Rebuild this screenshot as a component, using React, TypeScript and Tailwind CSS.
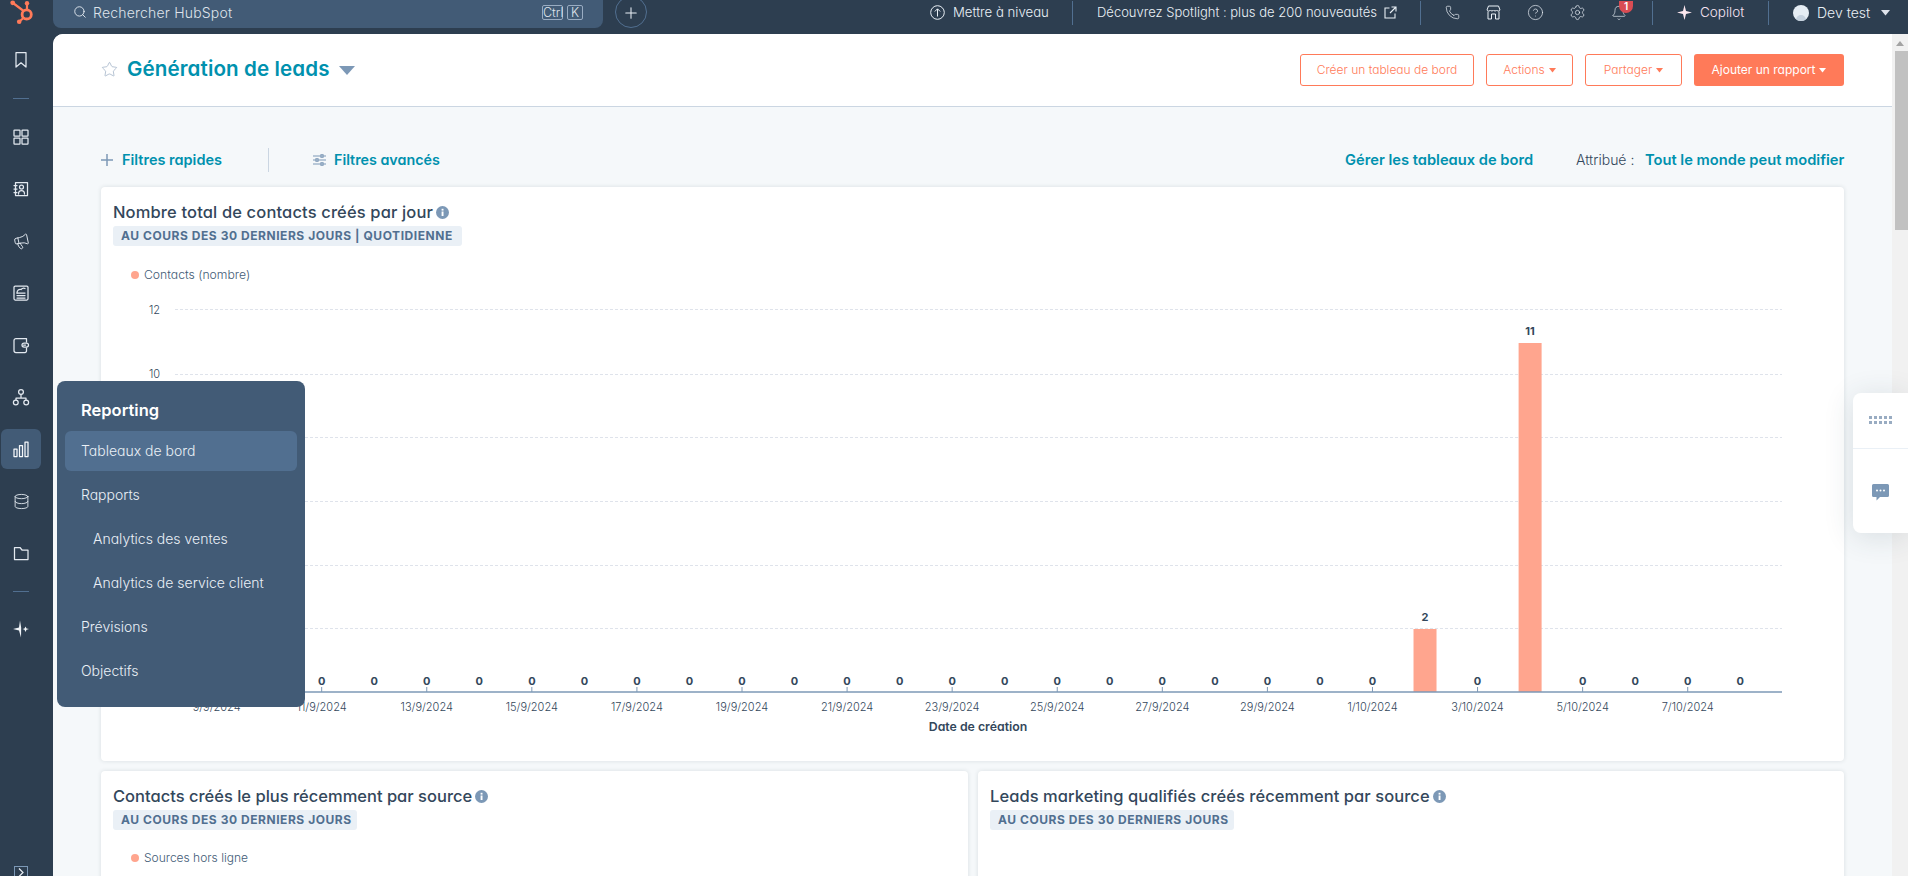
import React from "react";
import { Phone, CircleHelp, Settings, Bell, Database, Search, Plus, Star, Megaphone } from "lucide-react";

const S = { fill: "none", stroke: "#e3e9f0", strokeWidth: 1.25, strokeLinecap: "round" as const, strokeLinejoin: "round" as const };

function Logo() {
  return (
    <svg width="53" height="34" viewBox="0 0 53 34">
      <g stroke="#ff7a59" fill="none" strokeWidth="2.2" strokeLinecap="round">
        <circle cx="26.7" cy="14.4" r="4.6" strokeWidth="2.8" />
        <path d="M13 3 L23 10.5" />
        <path d="M27 4 V9" />
        <path d="M19.5 21.5 L23.6 17.8" />
      </g>
      <g fill="#ff7a59">
        <circle cx="12.7" cy="2.8" r="2.4" />
        <circle cx="27" cy="3.2" r="2.2" />
        <circle cx="19.2" cy="21.8" r="2.3" />
      </g>
    </svg>
  );
}

function NavIcon({ name }: { name: string }) {
  const p = { width: 20, height: 20, viewBox: "0 0 20 20", ...S };
  switch (name) {
    case "bookmark":
      return <svg {...p}><path d="M5 2.500h10v14.500l-5-4.200L5 17z" /></svg>;
    case "grid":
      return <svg {...p}><rect x="3" y="3" width="6" height="6" rx=".6" /><rect x="11" y="3" width="6" height="6" rx=".6" /><rect x="3" y="11" width="6" height="6" rx=".6" /><rect x="11" y="11" width="6" height="6" rx=".6" /></svg>;
    case "contact":
      return <svg {...p}><path d="M4.500 3.500h12v13h-12z" /><path d="M3 6.500h3M3 10h3M3 13.500h3" /><circle cx="10.500" cy="8" r="2" /><path d="M7.500 15c0-2.500 1.500-3.500 3-3.500s3 1 3 3.500" /></svg>;
    case "megaphone":
      return <Megaphone size={17} strokeWidth={1.25} color="#e3e9f0" className="-rotate-12" />;
    case "report":
      return <svg {...p}><rect x="3" y="3" width="14" height="14" rx="1.200" /><path d="M6 12.500h8M6 15h8M6 10c0-3 2-4 4-3.500 1.500-1.500 3-1.500 4-1" /><path d="M6 10h8" /></svg>;
    case "wallet":
      return <svg {...p}><path d="M15.500 7V3.500H5A2 2 0 0 0 3 5.500v10a2 2 0 0 0 2 2h9a1.500 1.500 0 0 0 1.500-1.500v-3" /><rect x="11" y="8" width="6.500" height="4.200" rx="2.100" /><path d="M12.500 10.100h2" /></svg>;
    case "org":
      return <svg {...p}><circle cx="10" cy="5" r="2.400" /><circle cx="4.800" cy="15.500" r="2.400" /><circle cx="15.200" cy="15.500" r="2.400" /><path d="M10 7.500v3.500M5 13v-2h10v2" /></svg>;
    case "chart":
      return <svg {...p} stroke="#f5f8fa"><rect x="3" y="10" width="3" height="7.500" /><rect x="8.500" y="6.500" width="3" height="11" /><rect x="14" y="3" width="3" height="14.500" /></svg>;
    case "database":
      return <Database size={17} strokeWidth={1.25} color="#e3e9f0" />;
    case "folder":
      return <svg {...p}><path d="M3.500 4.500h5.500l2 2.500h6v9.500H3.500z" /></svg>;
    case "spark":
      return <svg width="20" height="20" viewBox="0 0 20 20" fill="#f0f4f8"><path d="M9 1.500 10.200 8.800 10 18.500 8 11.500 2 10 8 8.500z" /><path d="M14.500 7.500 15.500 9.500 18 10 15.500 10.700 14.500 13 13.500 10.700 11.500 10 13.500 9.500z" /></svg>;
  }
  return null;
}

function NavItem({ name, active }: { name: string; active?: boolean }) {
  return (
    <div className="h-[52px] flex items-center pl-[1px]">
      <div className={`w-[40px] h-[40px] rounded-[6px] flex items-center justify-center ${active ? "bg-[#425b76]" : ""}`}>
        <NavIcon name={name} />
      </div>
    </div>
  );
}

function NavRail() {
  return (
    <nav className="w-[53px] shrink-0 bg-[#2d3e50] flex flex-col h-full">
      <div className="h-[34px] overflow-hidden"><Logo /></div>
      <NavItem name="bookmark" />
      <div className="h-[25px] flex items-center pl-[13px]"><div className="w-[16px] h-px bg-[#516f90]" /></div>
      {["grid", "contact", "megaphone", "report", "wallet", "org"].map((n) => <NavItem key={n} name={n} />)}
      <NavItem name="chart" active />
      <NavItem name="database" />
      <NavItem name="folder" />
      <div className="h-[24px] flex items-center pl-[13px]"><div className="w-[16px] h-px bg-[#516f90]" /></div>
      <NavItem name="spark" />
      <div className="mt-auto flex pl-[14px]">
        <div className="w-[14px] h-[10px] border-x border-t border-[#7c98b6] flex justify-center overflow-hidden">
          <svg width="10" height="10" viewBox="0 0 10 10" fill="none" stroke="#eaf0f6" strokeWidth="1.2"><path d="M3 1.500 7 5.500 3 9.500" /></svg>
        </div>
      </div>
    </nav>
  );
}

function Sep({ ml }: { ml: string }) {
  return <div className={`w-px h-[24px] bg-[#516f90] ${ml}`} />;
}

function TopBar() {
  return (
    <header className="h-[34px] shrink-0 flex items-start text-[#eaf0f6] text-[13px] font-light whitespace-nowrap">
      <div className="w-[550px] h-[28px] bg-[#425b76] rounded-b-lg flex items-center pb-[4px] text-[14px] text-[#dfe3eb]">
        <Search size={14} strokeWidth={1.5} className="ml-[20px]" color="#eaf0f6" />
        <span className="ml-[6px] w-[449px] tracking-[0.2px]">Rechercher HubSpot</span>
        <span className="w-[21px] h-[15px] border border-[#99acc2] rounded-[2px] text-[12.500px] leading-[13px] text-center">Ctrl</span>
        <span className="ml-[4px] w-[16px] h-[15px] border border-[#99acc2] rounded-[2px] text-[12.500px] leading-[13px] text-center">K</span>
      </div>
      <div className="ml-[12px] w-[32px] h-[32px] -mt-[4px] border border-[#516f90] rounded-full flex items-center justify-center">
        <Plus size={18} strokeWidth={1.4} color="#eaf0f6" className="mt-[1px]" />
      </div>
      <div className="h-[25px] flex items-center">
        <svg className="ml-[283px]" width="15" height="15" viewBox="0 0 15 15" fill="none" stroke="#eaf0f6" strokeWidth="1"><circle cx="7.500" cy="7.500" r="6.800" /><path d="M7.500 11.500V4M4.800 6.500 7.500 3.800 10.200 6.500" /></svg>
        <span className="ml-[8px] w-[95px] text-[13.200px]">Mettre à niveau</span>
        <Sep ml="ml-[24px]" />
        <span className="ml-[24px] w-[279px]">Découvrez Spotlight : plus de 200 nouveautés</span>
        <svg className="ml-[8px]" width="13" height="13" viewBox="0 0 13 13" fill="none" stroke="#eaf0f6" strokeWidth="1.100"><path d="M5.500 2H1v10h10V7.500M7.500 1H12v4.500M12 1 6 7" /></svg>
        <Sep ml="ml-[23px]" />
        <Phone size={15} strokeWidth={1.15} className="ml-[24px]" color="#eaf0f6" />
        <svg className="ml-[26px]" width="15" height="15" viewBox="0 0 15 15" fill="none" stroke="#eaf0f6" strokeWidth="1"><path d="M2.500 1h10l1.500 4a1.800 1.800 0 0 1-3.300 0 1.800 1.800 0 0 1-3.200 0 1.800 1.800 0 0 1-3.200 0A1.800 1.800 0 0 1 1 5zM2 6.500V14h3.500V9h4v5H13V6.500" /></svg>
        <CircleHelp size={17} strokeWidth={1} className="ml-[26px]" color="#eaf0f6" />
        <Settings size={17} strokeWidth={1} className="ml-[25px]" color="#eaf0f6" />
        <div className="relative ml-[25px] w-[16px] h-[16px]">
          <Bell size={16} strokeWidth={1} color="#eaf0f6" />
          <span className="absolute -top-[4px] left-[8px] w-[14px] h-[12px] rounded-b-full bg-[#d94c53] text-white text-[10px] font-semibold leading-[11px] text-center">1</span>
        </div>
        <Sep ml="ml-[25px]" />
        <svg className="ml-[24px]" width="15" height="15" viewBox="0 0 15 15" fill="#fde8ef"><path d="M7.500 0 9 6 15 7.500 9 9 7.500 15 6 9 0 7.500 6 6z" /></svg>
        <span className="ml-[8px] w-[44px] text-[13.500px] text-[#f6e3f2]">Copilot</span>
        <Sep ml="ml-[24px]" />
        <div className="ml-[24px] w-[16px] h-[16px] rounded-full bg-[#e5edf4] overflow-hidden flex justify-center items-end">
          <div className="w-[10px] h-[6px] rounded-t-full bg-[#c5d2df]" />
        </div>
        <span className="ml-[8px] w-[54px] text-[14px]">Dev test</span>
        <svg className="ml-[10px]" width="9" height="6" viewBox="0 0 9 6" fill="#dfe3eb"><path d="M0 0h9L4.500 5.500z" /></svg>
      </div>
    </header>
  );
}

function Caret({ color = "#ff7a59" }: { color?: string }) {
  return <svg className="ml-[4px] inline-block" width="7" height="5" viewBox="0 0 7 5" fill={color}><path d="M0 0h7L3.500 4.500z" /></svg>;
}

function OutlineBtn({ w, children }: { w: string; children: React.ReactNode }) {
  return <button className={`h-[32px] ${w} border border-[#ff7a59] rounded-[3px] text-[#ff7a59] text-[12px] font-light flex items-center justify-center bg-white whitespace-nowrap`}>{children}</button>;
}

function Info() {
  return (
    <svg className="ml-[3px] shrink-0" width="13" height="13" viewBox="0 0 13 13">
      <circle cx="6.500" cy="6.500" r="6.500" fill="#7c98b6" />
      <rect x="5.600" y="5.500" width="1.900" height="4.500" fill="#fff" />
      <rect x="5.600" y="2.800" width="1.900" height="1.800" fill="#fff" />
    </svg>
  );
}

function Header() {
  return (
    <div className="h-[73px] shrink-0 bg-white border-b border-[#cbd6e2] pl-[48px] pr-[48px] flex justify-between">
      <div className="flex items-center h-[70px]">
        <Star size={17} strokeWidth={1} color="#99acc2" />
        <span className="ml-[9px] w-[201px] text-[#0091ae] text-[20.600px] font-semibold whitespace-nowrap tracking-[0.1px]">Génération de leads</span>
        <svg className="ml-[11px] mt-[2px]" width="16" height="9" viewBox="0 0 16 9" fill="#7c98b6"><path d="M0 0h16L8 9z" /></svg>
      </div>
      <div className="flex gap-[12px] pt-[20px]">
        <OutlineBtn w="w-[174px]">Créer un tableau de bord</OutlineBtn>
        <OutlineBtn w="w-[87px]">Actions<Caret /></OutlineBtn>
        <OutlineBtn w="w-[97px]">Partager<Caret /></OutlineBtn>
        <button className="h-[32px] w-[150px] rounded-[3px] bg-[#ff7a59] text-white text-[12px] flex items-center justify-center whitespace-nowrap">Ajouter un rapport<Caret color="#fff" /></button>
      </div>
    </div>
  );
}

function FilterRow() {
  return (
    <div className="h-[24px] mt-[41px] flex items-center justify-between text-[14.500px] font-semibold text-[#0091ae] whitespace-nowrap">
      <div className="flex items-center">
        <svg width="12" height="12" viewBox="0 0 12 12" stroke="#7c98b6" strokeWidth="1.500"><path d="M6 0v12M0 6h12" /></svg>
        <span className="ml-[9px] w-[100px]">Filtres rapides</span>
        <div className="ml-[46px] w-px h-[24px] bg-[#cbd6e2]" />
        <svg className="ml-[44px]" width="13" height="12" viewBox="0 0 13 12" stroke="#7c98b6" strokeWidth="1.200" fill="#f5f8fa"><path d="M0 2h13M0 6h13M0 10h13" /><rect x="8" y=".8" width="2" height="2.400" /><rect x="3" y="4.800" width="2" height="2.400" /><rect x="8" y="8.800" width="2" height="2.400" /></svg>
        <span className="ml-[8px] text-[14.300px]">Filtres avancés</span>
      </div>
      <div className="flex items-center">
        <span className="w-[187px] text-[14.700px]">Gérer les tableaux de bord</span>
        <span className="ml-[44px] w-[69px] text-[14px] font-light text-[#33475b]">Attribué :</span>
        <span className="w-[199px] text-right text-[14.700px]">Tout le monde peut modifier</span>
      </div>
    </div>
  );
}

function CardTitle({ title, badge, w, bw, tr }: { title: string; badge: string; w: string; bw: string; tr: string }) {
  return (
    <div className="pl-[12px] pt-[15px]">
      <div className="h-[20px] flex items-center text-[16.500px] font-medium text-[#33475b] whitespace-nowrap">
        <span className={`${w} ${tr}`}>{title}</span><Info />
      </div>
      <div className={`mt-[4px] h-[20px] ${bw} bg-[#eaf0f6] rounded-[3px] text-[12px] font-bold text-[#516f90] tracking-[0.55px] flex items-center pl-[8px] whitespace-nowrap`}>{badge}</div>
    </div>
  );
}

const X0 = 216.6;
const STEP = 52.54;
const GRID = [309, 374, 437, 501, 565, 628];
const DAYS = Array.from({ length: 30 }, (_, i) => i);
function dateLabel(i: number) {
  const day = 9 + i;
  return day <= 30 ? `${day}/9/2024` : `${day - 30}/10/2024`;
}

function MainChart() {
  const bars: Record<number, number> = { 23: 2, 25: 11 };
  return (
    <svg className="block" width="1743" height="515" viewBox="0 0 1743 515">
      <g transform="translate(-101 -246)">
        <circle cx="135" cy="275" r="4" fill="#ffa58e" />
        <text x="144" y="279" fontSize="12.200" fontWeight="300" fill="#425b76">Contacts (nombre)</text>
        {GRID.map((y) => (
          <line key={y} x1="175" x2="1782" y1={y + 0.5} y2={y + 0.5} stroke="#dfe3eb" strokeDasharray="3 2" />
        ))}
        <text x="160" y="314" fontSize="11" textAnchor="end" fontWeight="300" fill="#33475b">12</text>
        <text x="160" y="378" fontSize="11" textAnchor="end" fontWeight="300" fill="#33475b">10</text>
        {DAYS.map((i) => {
          const x = X0 + STEP * i;
          const v = bars[i];
          if (v) {
            const top = v === 11 ? 343 : 629;
            return (
              <g key={i}>
                <rect x={x - 11.500} y={top} width="23" height={692 - top} fill="#ffa58e" />
                <text x={x} y={top - 8} fontSize="11" fontWeight="700" textAnchor="middle" fill="#33475b">{v}</text>
              </g>
            );
          }
          return <text key={i} x={x} y="685" fontSize="11" fontWeight="700" textAnchor="middle" fill="#33475b">0</text>;
        })}
        {DAYS.filter((i) => i % 2 === 0).map((i) => {
          const x = X0 + STEP * i;
          return (
            <g key={i}>
              <line x1={x} x2={x} y1="687" y2="692" stroke="#7c98b6" />
              <text x={x} y="711" fontSize="11" fontWeight="300" textAnchor="middle" fill="#33475b">{dateLabel(i)}</text>
            </g>
          );
        })}
        <line x1="175" x2="1782" y1="692" y2="692" stroke="#7c98b6" strokeWidth="1.500" />
        <text x="978" y="731" fontSize="12.300" fontWeight="600" textAnchor="middle" fill="#33475b">Date de création</text>
      </g>
    </svg>
  );
}

function Cards() {
  return (
    <>
      <section className="mt-[15px] h-[574px] shrink-0 bg-white rounded-[4px] shadow-[0_0_4px_rgba(45,62,80,0.14)]">
        <CardTitle title="Nombre total de contacts créés par jour" badge="AU COURS DES 30 DERNIERS JOURS | QUOTIDIENNE" w="w-[320px]" bw="w-[349px]" tr="tracking-[0.14px]" />
        <MainChart />
      </section>
      <div className="mt-[10px] flex gap-[10px] shrink-0">
        <section className="w-[867px] h-[300px] bg-white rounded-[4px] shadow-[0_0_4px_rgba(45,62,80,0.14)]">
          <CardTitle title="Contacts créés le plus récemment par source" badge="AU COURS DES 30 DERNIERS JOURS" w="w-[359px]" bw="w-[244px]" tr="tracking-normal" />
          <div className="mt-[20px] ml-[30px] h-[16px] flex items-center text-[12px] font-light text-[#425b76]">
            <span className="w-[8px] h-[8px] rounded-full bg-[#ffa58e]" />
            <span className="ml-[5px]">Sources hors ligne</span>
          </div>
        </section>
        <section className="flex-1 h-[300px] bg-white rounded-[4px] shadow-[0_0_4px_rgba(45,62,80,0.14)]">
          <CardTitle title="Leads marketing qualifiés créés récemment par source" badge="AU COURS DES 30 DERNIERS JOURS" w="w-[440px]" bw="w-[244px]" tr="tracking-[0.06px]" />
        </section>
      </div>
    </>
  );
}

function Scrollbar() {
  return (
    <div className="w-[16px] shrink-0 bg-[#f1f1f1] flex flex-col items-center">
      <svg className="mt-[7px]" width="8" height="5" viewBox="0 0 8 5" fill="#a3a3a3"><path d="M4 0 8 5H0z" /></svg>
      <div className="mt-[5px] ml-[2px] w-[13px] h-[179px] bg-[#c1c1c1]" />
    </div>
  );
}

function Flyout() {
  const rows = [
    { t: "Tableaux de bord", active: true },
    { t: "Rapports" },
    { t: "Analytics des ventes", sub: true },
    { t: "Analytics de service client", sub: true },
    { t: "Prévisions" },
    { t: "Objectifs" },
  ];
  return (
    <div className="absolute left-[57px] top-[381px] w-[248px] h-[326px] rounded-[8px] bg-[#425b76] px-[8px] text-white">
      <div className="h-[50px] pl-[16px] pt-[17px] text-[16.500px] leading-[24px] font-semibold">Reporting</div>
      <div className="flex flex-col gap-[4px]">
        {rows.map((r) => (
          <div key={r.t} className={`h-[40px] pb-[2px] rounded-[6px] flex items-center text-[14px] font-light text-[#eaf0f6] ${r.active ? "bg-[#516f90]" : ""} ${r.sub ? "pl-[28px]" : "pl-[16px]"}`}>
            {r.t}
          </div>
        ))}
      </div>
    </div>
  );
}

function SidePanel() {
  return (
    <div className="absolute right-0 top-[393px] w-[55px] h-[140px] bg-white rounded-l-[8px] shadow-[0_4px_30px_rgba(45,62,80,0.14)] flex flex-col">
      <div className="h-[56px] border-b border-[#eaf0f6] flex items-center justify-center">
        <svg width="23" height="9" viewBox="0 0 23 9" fill="#99acc2">
          {[0, 5, 10, 15, 20].map((x) => <g key={x}><rect x={x} y="0" width="3" height="3" /><rect x={x} y="5" width="3" height="3" /></g>)}
        </svg>
      </div>
      <div className="flex-1 flex justify-center pt-[35px]">
        <svg width="17" height="17" viewBox="0 0 17 17"><path d="M1.500 0h14A1.500 1.500 0 0 1 17 1.500v10a1.500 1.500 0 0 1-1.500 1.500H8l-3.500 3.500V13h-3A1.500 1.500 0 0 1 0 11.500v-10A1.500 1.500 0 0 1 1.500 0z" fill="#7c98b6" /><circle cx="5" cy="6.500" r="1" fill="#fff" /><circle cx="8.500" cy="6.500" r="1" fill="#fff" /><circle cx="12" cy="6.500" r="1" fill="#fff" /></svg>
      </div>
    </div>
  );
}

export default function App() {
  return (
    <div className="relative w-full h-[876px] overflow-hidden flex bg-[#2d3e50] font-['Inter','Liberation_Sans',sans-serif] [font-feature-settings:'cv11']">
      <NavRail />
      <div className="flex-1 min-w-0 flex flex-col">
        <TopBar />
        <div className="flex-1 min-h-0 flex">
          <main className="flex-1 min-w-0 rounded-tl-[10px] bg-[#f5f8fa] overflow-hidden flex flex-col">
            <Header />
            <div className="px-[48px] flex flex-col">
              <FilterRow />
              <Cards />
            </div>
          </main>
          <Scrollbar />
        </div>
      </div>
      <Flyout />
      <SidePanel />
    </div>
  );
}
